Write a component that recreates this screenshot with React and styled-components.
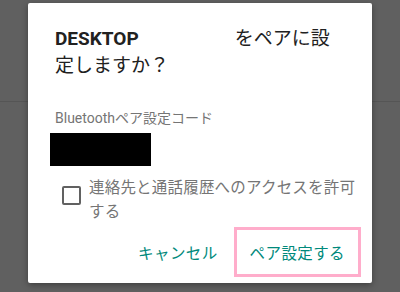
import React from 'react'
import styled, { createGlobalStyle } from 'styled-components'

const GlobalStyle = createGlobalStyle`
  html, body {
    margin: 0;
    padding: 0;
    background: #606060;
  }
  body {
    font-family: Roboto, "Noto Sans CJK JP", sans-serif;
  }
`

const Screen = styled.div`
  position: relative;
  width: 400px;
  height: 292px;
  overflow: hidden;
  background: #606060;
`

const BackdropPage = styled.div`
  display: flex;
  flex-direction: column;
  height: 100%;
`

const BackdropRow = styled.div`
  height: ${(p) => p.h}px;
  border-bottom: ${(p) => (p.line ? '1px solid #555' : 'none')};
  box-sizing: border-box;
`

const Overlay = styled.div`
  position: absolute;
  inset: 0;
  display: flex;
  justify-content: center;
  align-items: flex-start;
  padding-top: 3px;
`

const Dialog = styled.div`
  width: 344px;
  height: 280px;
  box-sizing: border-box;
  background: #fff;
  border-radius: 2px;
  box-shadow: 0 2px 6px rgba(0, 0, 0, 0.35);
  padding: 22px 11px 6px 27px;
  display: flex;
  flex-direction: column;
`

const Title = styled.h2`
  margin: 0;
  font-size: 19px;
  line-height: 27px;
  font-weight: 400;
  color: #212121;
`

const TitleLine = styled.div`
  display: flex;
  gap: 96px;
  white-space: nowrap;
`

const DeviceName = styled.span`
  font-weight: 700;
`

const CodeLabel = styled.div`
  margin-top: 30px;
  font-size: 14px;
  line-height: 18px;
  color: #757575;
`

const CodeMask = styled.div`
  margin-left: -5px;
  margin-top: 6px;
  width: 101px;
  height: 33px;
  background: #000;
`

const ContactRow = styled.label`
  margin-top: 10px;
  display: flex;
  align-items: flex-start;
  gap: 8px;
  padding-left: 7px;
`

const Box = styled.span`
  flex: none;
  width: 15px;
  height: 15px;
  margin-top: 10px;
  border: 2px solid #616161;
  border-radius: 2px;
`

const ContactText = styled.span`
  font-size: 15.5px;
  line-height: 24px;
  color: #757575;
  letter-spacing: 0.2px;
`

const Actions = styled.div`
  margin-top: auto;
  display: flex;
  justify-content: flex-end;
  align-items: center;
  gap: 13px;
`

const ActionButton = styled.button`
  background: none;
  border: ${(p) => (p.highlight ? '3px solid #ffadcb' : '3px solid transparent')};
  font-family: inherit;
  font-size: 15.5px;
  color: #00897b;
  letter-spacing: 0.4px;
  height: 50px;
  padding: 0 ${(p) => (p.highlight ? 13 : 0)}px;
  cursor: pointer;
`

export default function App() {
  return (
    <>
      <GlobalStyle />
      <Screen>
        <BackdropPage>
          <BackdropRow h={102} line />
          <BackdropRow h={60} />
        </BackdropPage>
        <Overlay>
          <Dialog>
            <Title>
              <TitleLine>
                <DeviceName>DESKTOP</DeviceName>
                <span>をペアに設</span>
              </TitleLine>
              <div>定しますか？</div>
            </Title>
            <CodeLabel>Bluetoothペア設定コード</CodeLabel>
            <CodeMask />
            <ContactRow>
              <Box />
              <ContactText>連絡先と通話履歴へのアクセスを許可する</ContactText>
            </ContactRow>
            <Actions>
              <ActionButton>キャンセル</ActionButton>
              <ActionButton highlight>ペア設定する</ActionButton>
            </Actions>
          </Dialog>
        </Overlay>
      </Screen>
    </>
  )
}
